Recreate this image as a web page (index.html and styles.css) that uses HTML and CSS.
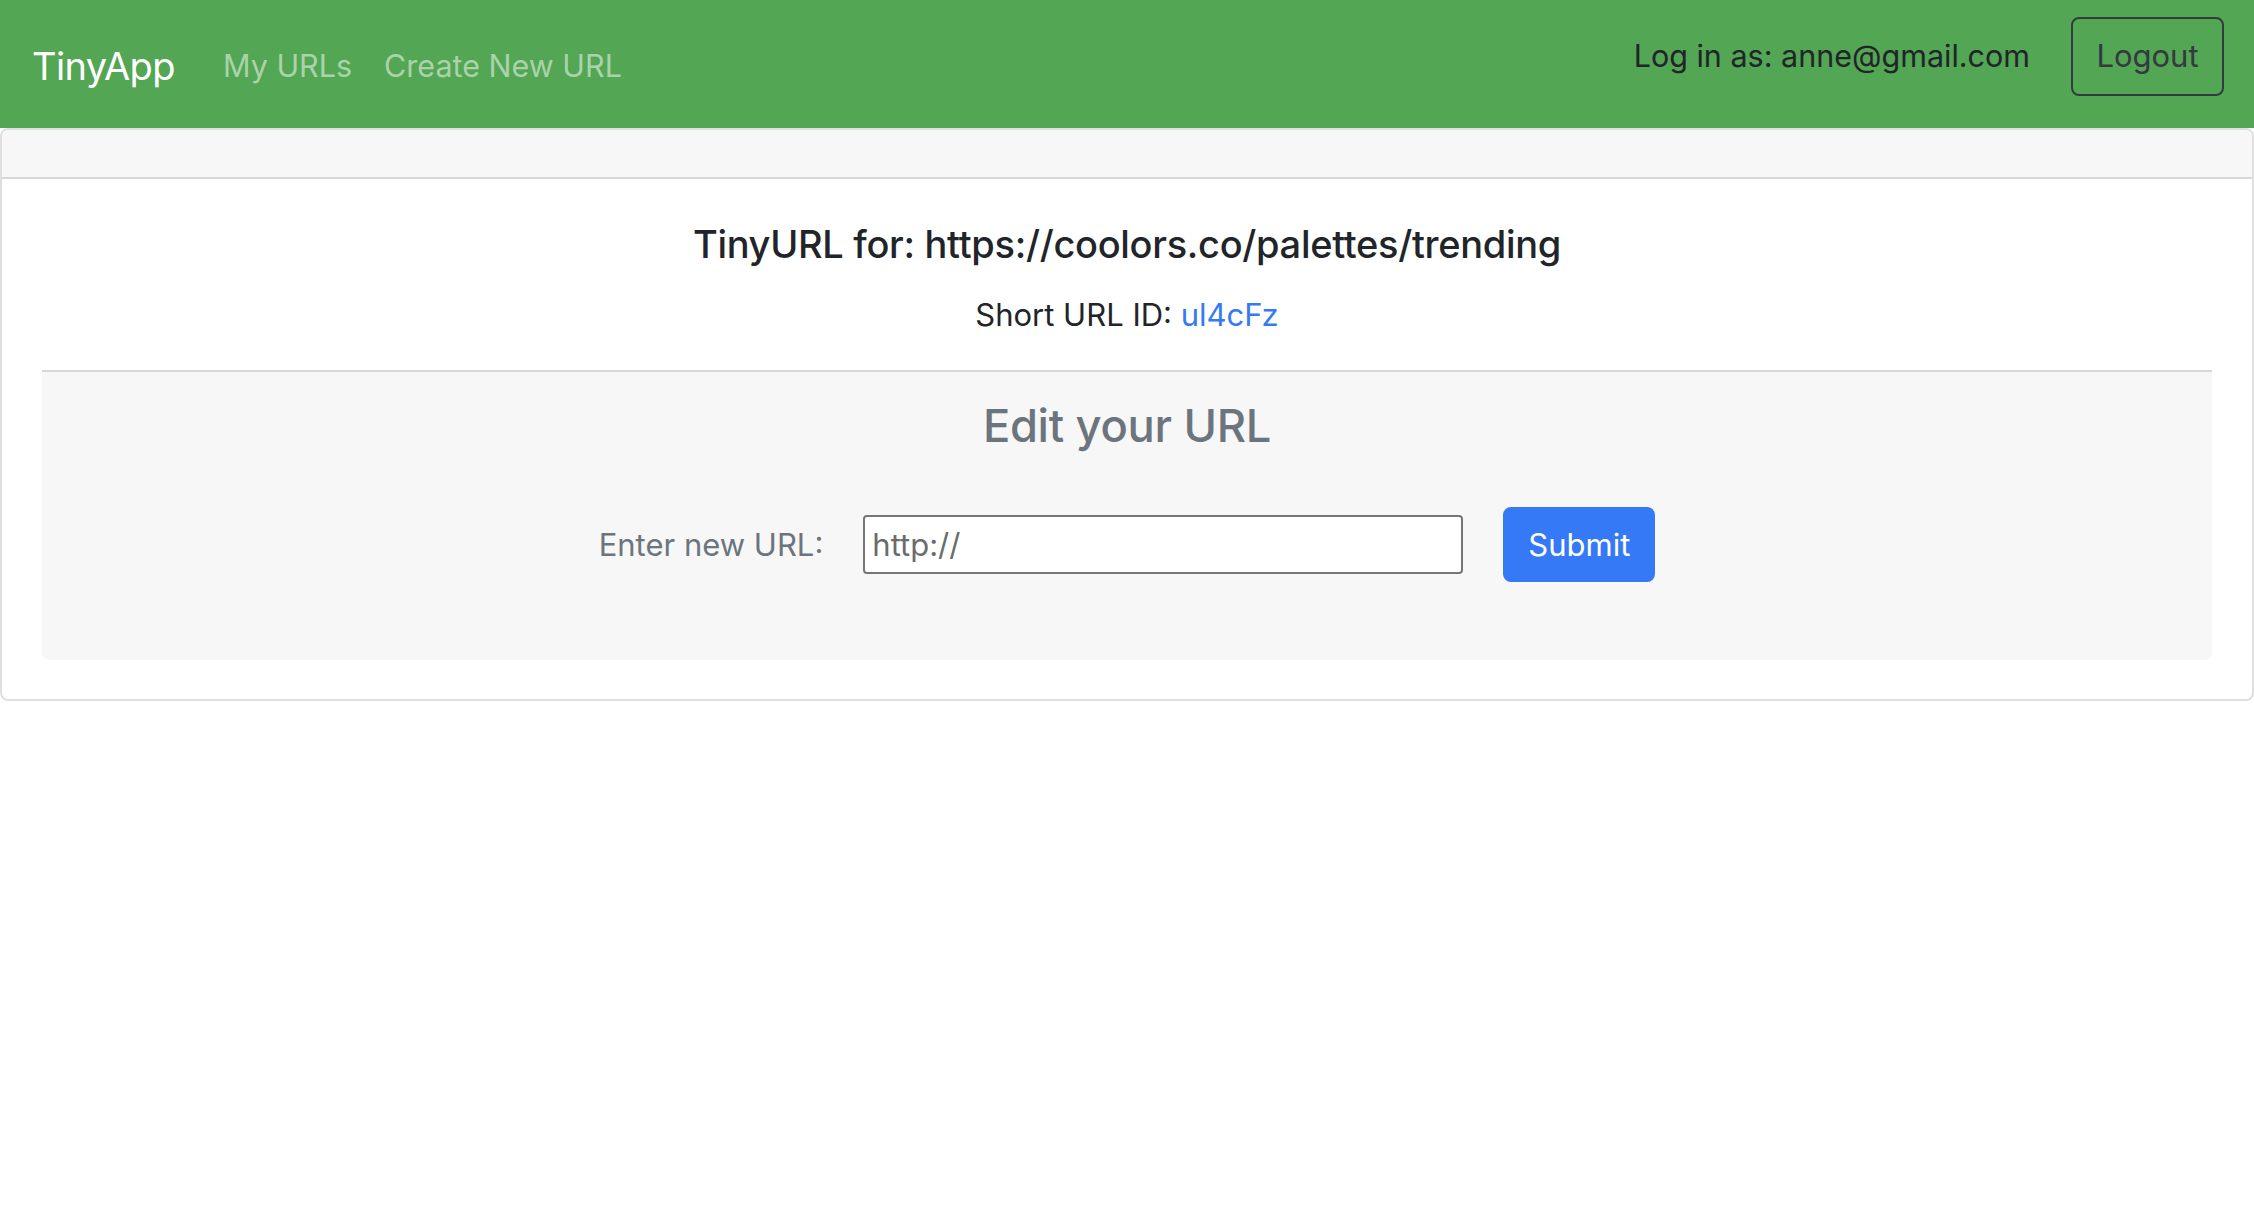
FILE: index.html
```html
<!DOCTYPE html>
<html lang="en">
<head>
<meta charset="utf-8">
<title>TinyApp</title>
<link rel="stylesheet" href="styles.css">
</head>
<body>
<nav class="navbar">
  <div class="nav-left">
    <a class="brand" href="#">TinyApp</a>
    <a class="nav-link" href="#">My URLs</a>
    <a class="nav-link" href="#">Create New URL</a>
  </div>
  <div class="nav-right">
    <span class="login">Log in as: anne@gmail.com</span>
    <button class="btn-logout">Logout</button>
  </div>
</nav>
<main class="card">
  <div class="card-header"></div>
  <div class="card-body">
    <h5 class="card-title">TinyURL for: https://coolors.co/palettes/trending</h5>
    <p class="card-text">Short URL ID: <a href="#" class="short-link">ul4cFz</a></p>
    <div class="card-footer">
      <h4 class="edit-title">Edit your URL</h4>
      <form class="edit-form">
        <label class="edit-label" for="longURL">Enter new URL:</label>
        <input class="edit-input" id="longURL" type="text" placeholder="http://">
        <button class="btn-submit" type="submit">Submit</button>
      </form>
    </div>
  </div>
</main>
</body>
</html>
```
FILE: styles.css
```css
* { box-sizing: border-box; }
html, body { margin: 0; padding: 0; }
body {
  font-family: "Inter", "Liberation Sans", sans-serif;
  font-size: 32px;
  line-height: 1.5;
  color: #212529;
  background: #fff;
}
a { text-decoration: none; }

.navbar {
  height: 128px;
  background: #53a653;
  display: flex;
  align-items: center;
  justify-content: space-between;
  padding: 0 30px 0 32px;
}
.nav-left { display: flex; align-items: center; padding-top: 4px; }
.brand {
  color: #fff;
  font-size: 38px;
  margin-right: 32px;
  letter-spacing: -0.6px;
}
.nav-link {
  color: #aad3aa;
  padding: 0 16px;
  font-size: 30.5px;
}
.nav-right { display: flex; align-items: center; padding-bottom: 16px; }
.login { color: #212529; font-size: 30.5px; margin-right: 41px; }
.btn-logout {
  font-family: inherit;
  font-size: 31px;
  line-height: 1.5;
  color: #343a40;
  background: transparent;
  border: 2px solid #343a40;
  border-radius: 8px;
  padding: 10px 22px;
  width: 153px;
  height: 79px;
}

.card {
  display: block;
  border: 2px solid rgba(0,0,0,.125);
  border-radius: 8px;
  margin-top: 0;
}
.card-header {
  height: 49px;
  background: #f7f7f7;
  border-bottom: 2px solid rgba(0,0,0,.125);
  border-radius: 6px 6px 0 0;
}
.card-body { padding: 43px 40px 39px; text-align: center; }
.card-title {
  margin: 0 0 24px;
  font-size: 38px;
  font-weight: 500;
  line-height: 1.2;
  letter-spacing: -0.3px;
}
.card-text { margin: 0 0 32px; font-size: 31px; line-height: 1.5; }
.short-link { color: #3579f6; }

.card-footer {
  background: #f7f7f7;
  border-top: 2px solid rgba(0,0,0,.125);
  border-radius: 0 0 8px 8px;
  padding: 27px 40px 78px;
}
.edit-title {
  margin: 0 0 54px;
  font-size: 45.3px;
  font-weight: 500;
  line-height: 1.2;
  color: #6c757d;
  letter-spacing: -0.3px;
}
.edit-form {
  display: flex;
  align-items: center;
  justify-content: center;
  gap: 40px;
}
.edit-label { color: #6c757d; font-size: 31px; }
.edit-input {
  width: 600px;
  height: 59px;
  font-family: inherit;
  font-size: 31px;
  padding: 0 7px;
  border: 2px solid #767676;
  border-radius: 4px;
  background: #fff;
  color: #212529;
}
.edit-input::placeholder { color: #6b6b6b; }
.btn-submit {
  font-family: inherit;
  font-size: 31px;
  line-height: 1.5;
  width: 152px;
  height: 75px;
  color: #fff;
  background: #3579f6;
  border: 2px solid #3579f6;
  border-radius: 8px;
  padding: 0;
}
```
